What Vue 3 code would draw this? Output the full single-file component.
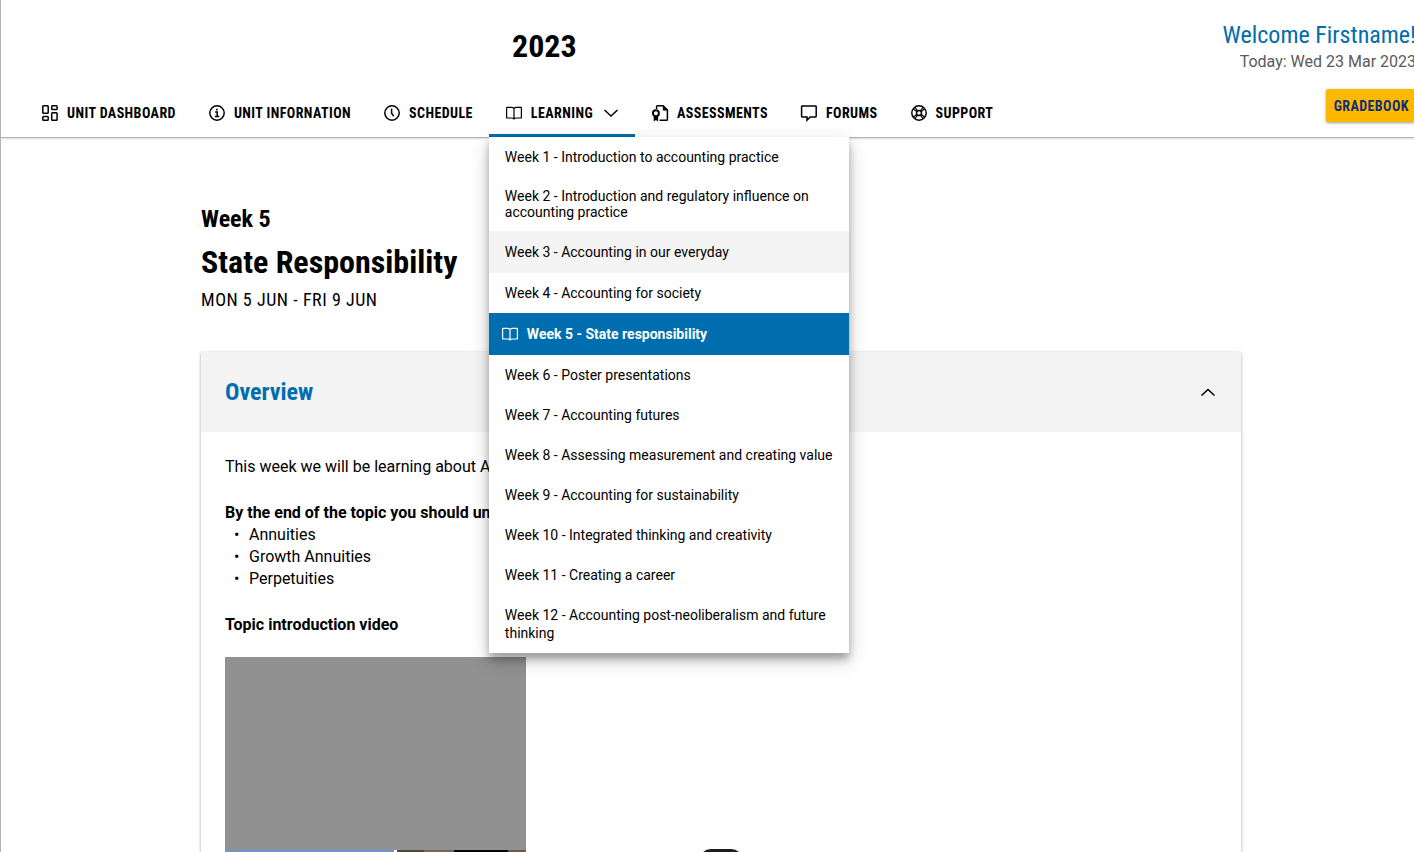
<script setup>
import { ref } from 'vue'

const navItems = [
  { id: 'dashboard', label: 'Unit dashboard' },
  { id: 'info', label: 'Unit infornation' },
  { id: 'schedule', label: 'Schedule' },
  { id: 'learning', label: 'Learning' },
  { id: 'assessments', label: 'Assessments' },
  { id: 'forums', label: 'Forums' },
  { id: 'support', label: 'Support' },
]

const weeks = [
  { text: 'Week 1 - Introduction to accounting practice' },
  { text: 'Week 2 - Introduction and regulatory influence on accounting practice', state: 'tight' },
  { text: 'Week 3 - Accounting in our everyday', state: 'hovered' },
  { text: 'Week 4 - Accounting for society' },
  { text: 'Week 5 - State responsibility', state: 'current' },
  { text: 'Week 6 - Poster presentations' },
  { text: 'Week 7 - Accounting futures' },
  { text: 'Week 8 - Assessing measurement and creating value' },
  { text: 'Week 9 - Accounting for sustainability' },
  { text: 'Week 10 - Integrated thinking and creativity' },
  { text: 'Week 11 - Creating a career' },
  { text: 'Week 12 - Accounting post-neoliberalism and future thinking' },
]

const menuOpen = ref(true)
const overviewOpen = ref(true)
</script>

<template>
  <div class="page">
    <header class="header">
      <div class="banner">
        <p class="year">2023</p>
        <div class="greeting">
          <p class="welcome">Welcome Firstname!</p>
          <p class="today">Today: Wed 23 Mar 2023</p>
        </div>
      </div>
      <div class="bar">
        <nav class="nav" aria-label="Unit">
          <div v-for="item in navItems" :key="item.id" class="nav-cell" :class="{ active: item.id === 'learning' }">
            <component
              :is="item.id === 'learning' ? 'button' : 'a'"
              class="nav-item"
              :href="item.id === 'learning' ? undefined : '#'"
              :aria-expanded="item.id === 'learning' ? menuOpen : undefined"
              @click.prevent="item.id === 'learning' && (menuOpen = !menuOpen)"
            >
              <svg class="icon" viewBox="0 0 18 18" aria-hidden="true">
                <g v-if="item.id === 'dashboard'">
                  <rect x="1.8" y="1.8" width="5.4" height="7.4" rx="0.8" />
                  <rect x="10.7" y="1.8" width="5.4" height="3.8" rx="0.8" />
                  <rect x="1.8" y="12.4" width="5.4" height="3.8" rx="0.8" />
                  <rect x="10.7" y="8.8" width="5.4" height="7.4" rx="0.8" />
                </g>
                <g v-else-if="item.id === 'info'">
                  <circle cx="9" cy="9" r="7.2" />
                  <path d="M7.2 8h2v4.2M6.9 12.4h4.4" />
                  <path d="M8.9 4.7v1.7" />
                </g>
                <g v-else-if="item.id === 'schedule'">
                  <circle cx="9" cy="9" r="7.2" />
                  <path d="M8.6 4.6v4.6l2.2 3" />
                </g>
                <g v-else-if="item.id === 'learning'" class="thin">
                  <path d="M9 4.5C8.4 3.7 7.6 3.4 6.5 3.4H2.2q-.6 0-.6.6v9.400q0 .6.6.6h4.600c1 0 1.800.2 2.200.9.400-.7 1.200-.9 2.200-.9h4.600q.6 0 .6-.6V4q0-.6-.6-.6h-4.300C10.400 3.400 9.600 3.700 9 4.500v10.400" />
                </g>
                <g v-else-if="item.id === 'assessments'">
                  <path d="M5.600 5V2.600q0-.8.8-.8h5.800l4.200 4.200v9.400q0 .8-.8.8H8.600" />
                  <path class="solid" d="M11.800 1.200l5.200 5.200h-5.200z" />
                  <circle cx="4.900" cy="9.300" r="3" class="heavy" />
                  <path class="solid" d="M2.700 12h4.400v5.600l-2.200-1.600-2.200 1.600z" />
                </g>
                <g v-else-if="item.id === 'forums'">
                  <path d="M2.200 1.900h13.400q.6 0 .6.600v9.800q0 .6-.6.600H10.200l-3.200 3.200v-3.200H2.200q-.6 0-.6-.6V2.500q0-.6.600-.6z" />
                </g>
                <g v-else>
                  <circle cx="9" cy="9" r="7.200" />
                  <circle cx="9" cy="9" r="2.500" />
                  <path d="M4.800 3.200l3 3.800M3.200 4.800l3.800 3M13.200 3.200l-3 3.800M14.800 4.800l-3.800 3M4.800 14.800l3-3.800M3.200 13.200l3.800-3M13.200 14.800l-3-3.800M14.800 13.200l-3.800-3" class="thin" />
                </g>
              </svg>
              <span>{{ item.label }}</span>
              <svg v-if="item.id === 'learning'" class="chevron" viewBox="0 0 16 16" aria-hidden="true">
                <path d="M1.500 5l6.500 6 6.500-6" />
              </svg>
            </component>
            <ul v-if="item.id === 'learning' && menuOpen" class="menu">
              <li v-for="week in weeks" :key="week.text">
                <a href="#" class="week" :class="week.state">
                  <svg v-if="week.state === 'current'" class="icon thin" viewBox="0 0 18 18" aria-hidden="true">
                    <path d="M9 4.500C8.400 3.700 7.600 3.400 6.500 3.400H2.200q-.6 0-.6.6v9.400q0 .6.6.6h4.600c1 0 1.800.2 2.200.9.400-.7 1.200-.9 2.200-.9h4.600q.6 0 .6-.6V4q0-.6-.6-.6h-4.300C10.400 3.400 9.600 3.700 9 4.500v10.400" />
                  </svg>
                  <span>{{ week.text }}</span>
                </a>
              </li>
            </ul>
          </div>
        </nav>
        <button class="gradebook">Gradebook</button>
      </div>
    </header>

    <main class="main">
      <p class="week-label">Week 5</p>
      <h1>State Responsibility</h1>
      <p class="dates">Mon 5 Jun - Fri 9 Jun</p>

      <section class="card">
        <h2>
          <button class="card-head" :aria-expanded="overviewOpen" @click="overviewOpen = !overviewOpen">
            <span>Overview</span>
            <svg class="chevron" viewBox="0 0 16 16" aria-hidden="true">
              <path d="M1.500 11.500l6.500-6 6.500 6" />
            </svg>
          </button>
        </h2>
        <div v-if="overviewOpen" class="card-body">
          <p>This week we will be learning about Annuities</p>
          <h3>By the end of the topic you should understand</h3>
          <ul class="topics">
            <li>Annuities</li>
            <li>Growth Annuities</li>
            <li>Perpetuities</li>
          </ul>
          <h3>Topic introduction video</h3>
          <div class="video">
            <div class="cover"></div>
            <div class="still"></div>
          </div>
        </div>
      </section>
    </main>
    <div class="dock"></div>
  </div>
</template>

<style>
body {
  margin: 0;
}
</style>

<style scoped>
.page {
  position: relative;
  box-sizing: border-box;
  height: 100vh;
  overflow: hidden;
  border-left: 1px solid #b4b4b4;
  background: #fff;
  color: #000;
  font-family: Roboto, "Liberation Sans", sans-serif;
  font-size: 16px;
  line-height: 22px;
}

p,
h1,
h2,
h3,
ul {
  margin: 0;
  padding: 0;
}

ul {
  list-style: none;
}

svg {
  flex: none;
  fill: none;
  stroke: currentColor;
  stroke-width: 1.5;
}

.year,
.welcome,
.nav-item,
.gradebook,
.week-label,
.dates,
h1,
h2 {
  font-family: "Roboto Condensed", Roboto, sans-serif;
}

.header {
  position: relative;
  z-index: 1;
  border-bottom: 1px solid #b4b4b4;
  box-shadow: 0 1px 2px rgba(0, 0, 0, 0.15);
}

.banner {
  display: flex;
  justify-content: space-between;
  height: 88px;
}

.year {
  padding: 26px 0 0 511px;
  font-size: 32px;
  line-height: 40px;
  font-weight: 700;
}

.greeting {
  padding-top: 20px;
  margin-right: -2px;
  text-align: right;
  white-space: nowrap;
}

.welcome {
  color: #006dae;
  font-size: 24px;
  line-height: 30px;
}

.today {
  color: #5a5a5a;
  line-height: 24px;
}

.bar {
  display: flex;
  justify-content: space-between;
  align-items: flex-start;
}

.nav {
  display: flex;
  padding-left: 24px;
}

.nav-cell {
  position: relative;
}

.nav-item {
  display: flex;
  align-items: center;
  gap: 8px;
  box-sizing: border-box;
  height: 49px;
  padding: 3px 16px 0;
  border: 0;
  border-bottom: 3px solid transparent;
  background: none;
  color: #000;
  font-size: 14px;
  font-weight: 700;
  letter-spacing: 0.03em;
  text-decoration: none;
  text-transform: uppercase;
  white-space: nowrap;
}

.active .nav-item {
  border-bottom-color: #006dae;
}

.icon {
  width: 18px;
  height: 18px;
}

.thin {
  stroke-width: 1.2;
}

.heavy {
  stroke-width: 1.9;
}

.solid {
  fill: currentColor;
  stroke: none;
}

.chevron {
  width: 16px;
  height: 16px;
}

.nav-item .chevron {
  margin-left: 2px;
}

.gradebook {
  height: 33px;
  margin-top: 1px;
  padding: 0 5px 0 8px;
  border: 0;
  border-radius: 2px 0 0 2px;
  background: #ffb800;
  color: #0f2d78;
  font-size: 14px;
  font-weight: 700;
  letter-spacing: 0.03em;
  text-transform: uppercase;
  box-shadow: 0 1px 3px rgba(0, 0, 0, 0.4);
}

.menu {
  position: absolute;
  top: 100%;
  left: 0;
  width: 360px;
  background: #fff;
  box-shadow: 0 6px 8px rgba(0, 0, 0, 0.3), 0 8px 20px rgba(0, 0, 0, 0.16);
}

.week {
  display: flex;
  align-items: center;
  gap: 8px;
  padding: 11px 16px;
  color: #000;
  font-size: 14px;
  line-height: 18px;
  text-decoration: none;
}

.tight {
  line-height: 16px;
}

.hovered {
  padding: 12px 16px;
  background: #f4f4f4;
}

.current {
  padding: 12px;
  background: #006dae;
  color: #fff;
  font-weight: 700;
}

.main {
  padding: 67px 173px 0 200px;
}

.week-label {
  font-size: 24px;
  line-height: 28px;
  font-weight: 700;
}

h1 {
  margin-top: 8px;
  font-size: 32px;
  line-height: 42px;
}

.dates {
  margin-top: 6px;
  font-size: 18px;
  line-height: 22px;
  letter-spacing: 0.03em;
  text-transform: uppercase;
}

.card {
  margin-top: 41px;
  box-shadow: 0 1px 3px rgba(0, 0, 0, 0.35);
}

.card-head {
  display: flex;
  align-items: center;
  justify-content: space-between;
  width: 100%;
  height: 80px;
  padding: 0 25px 0 24px;
  border: 0;
  background: #f4f4f4;
  color: #006dae;
  font: inherit;
  font-size: 24px;
}

.card-head .chevron {
  color: #000;
}

.card-body {
  padding: 24px;
}

h3 {
  margin-top: 24px;
  font-size: 16px;
}

.topics li {
  display: flex;
  gap: 9px;
  padding-left: 9px;
}

.topics li::before {
  content: "•";
  width: 6px;
  font-size: 16px;
}

.video {
  width: 301px;
  margin-top: 21px;
}

.cover {
  height: 193px;
  background: #919191;
}

.still {
  height: 140px;
  background: linear-gradient(90deg, #7096cf 0 56%, #fff 56% 57%, #51483a 57% 66%, #7c6850 66% 76%, #080706 76% 94%, #6b5a45 94%);
}

.dock {
  position: absolute;
  bottom: -35px;
  left: 50%;
  width: 44px;
  height: 38px;
  margin-left: -9px;
  border-radius: 12px;
  background: #1c1c1c;
}
</style>
